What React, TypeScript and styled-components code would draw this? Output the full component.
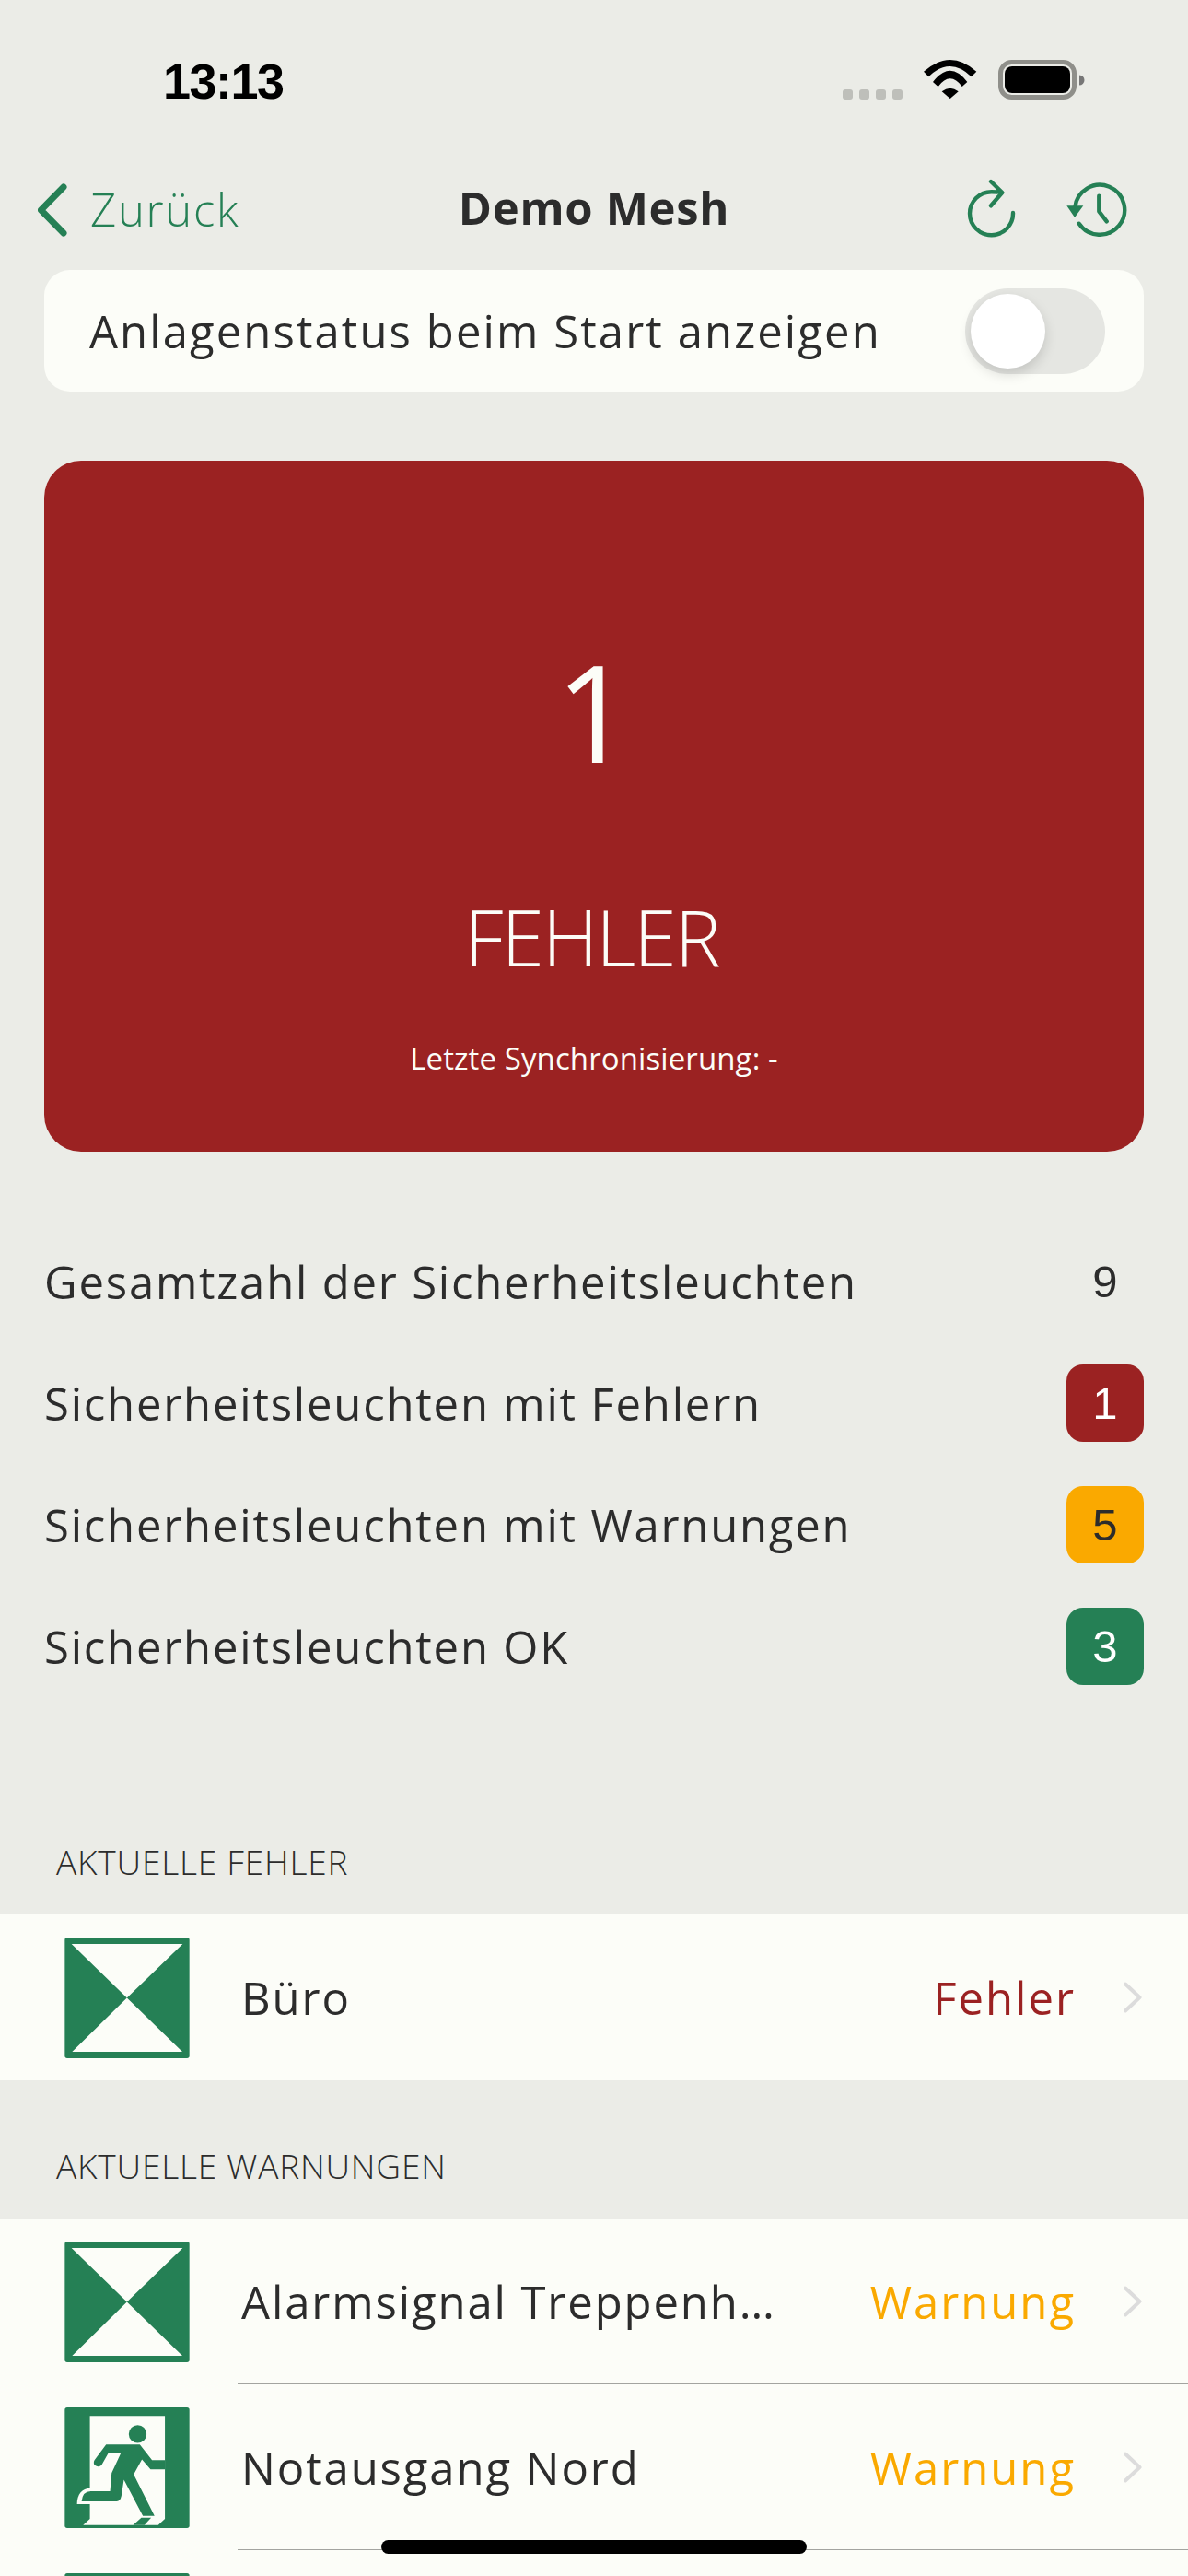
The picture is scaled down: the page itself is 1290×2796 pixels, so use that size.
import React from "react";
import styled, { createGlobalStyle } from "styled-components";

const GREEN = "#258055";
const RED = "#9b2222";
const ORANGE = "#faa900";
const INK = "#2c2c2c";
const TEXT_FONT = `"Open Sans", "Liberation Sans", sans-serif`;

type Tone = "error" | "warning" | "ok";

const toneColor = (tone: Tone) =>
  tone === "error" ? RED : tone === "warning" ? ORANGE : GREEN;

const stats: { label: string; value: number; tone?: Tone }[] = [
  { label: "Gesamtzahl der Sicherheitsleuchten", value: 9 },
  { label: "Sicherheitsleuchten mit Fehlern", value: 1, tone: "error" },
  { label: "Sicherheitsleuchten mit Warnungen", value: 5, tone: "warning" },
  { label: "Sicherheitsleuchten OK", value: 3, tone: "ok" },
];

const GlobalStyle = createGlobalStyle`
  html, body {
    margin: 0;
    padding: 0;
    background: #ebece7;
  }
`;

const App: React.FC = () => {
  return (
    <Page>
      <GlobalStyle />
      <StatusBar>
        <Clock>13:13</Clock>
        <StatusIcons>
          <SignalDots>
            <SignalDot />
            <SignalDot />
            <SignalDot />
            <SignalDot />
          </SignalDots>
          <svg width="58" height="43" viewBox="0 0 58 43">
            <path d="M0 12.7Q28.7-12.7 57.3 12.7L51.7 18.3Q28.7-4.3 5.3 18.3Z" />
            <path d="M10 24Q28.7-.6 47.3 24L41.7 29Q28.7 11.6 15.7 29Z" />
            <path d="M19.7 34.3Q28.7 27 37.7 34.3L28.7 42Z" />
          </svg>
          <svg width="94" height="43" viewBox="0 0 94 43">
            <rect x="2.5" y="2.5" width="80" height="38" rx="12" fill="none" stroke="#8f8f8a" strokeWidth="5" />
            <rect x="7" y="7" width="71" height="29" rx="8" fill="#000" />
            <path d="M88 16.500a5.500 5.500 0 0 1 0 11z" fill="#777" />
          </svg>
        </StatusIcons>
      </StatusBar>

      <NavBar>
        <BackLink>
          <svg width="32" height="58" viewBox="0 0 32 58">
            <path d="M28 4L3.500 29L28 54" fill="none" stroke={GREEN} strokeWidth="7" strokeLinecap="round" strokeLinejoin="round" />
          </svg>
          <BackLabel>Zurück</BackLabel>
        </BackLink>
        <NavTitle>Demo Mesh</NavTitle>
        <NavActions>
          <svg width="60" height="68" viewBox="0 0 60 68">
            <path
              d="M53 37A23.500 23.500 0 1 1 29.700 14.200L36 14.500M29 3l12.300 12L29 29.300"
              fill="none"
              stroke={GREEN}
              strokeWidth="4.400"
              strokeLinecap="round"
              strokeLinejoin="round"
            />
          </svg>
          <svg width="68" height="62" viewBox="0 0 68 62">
            <path
              d="M15.700 45.700A27 27 0 1 0 11.300 28M37.300 15.700V32.300L45.700 43.300"
              fill="none"
              stroke={GREEN}
              strokeWidth="4.400"
              strokeLinecap="round"
              strokeLinejoin="round"
            />
            <path d="M2.300 26.300H20.300L11 39Z" fill={GREEN} />
          </svg>
        </NavActions>
      </NavBar>

      <SettingCard>
        <SettingLabel>Anlagenstatus beim Start anzeigen</SettingLabel>
        <Toggle>
          <ToggleKnob />
        </Toggle>
      </SettingCard>

      <SummaryCard>
        <SummaryCount>1</SummaryCount>
        <SummaryState>FEHLER</SummaryState>
        <SummarySync>Letzte Synchronisierung: -</SummarySync>
      </SummaryCard>

      <StatList>
        {stats.map((stat) => (
          <StatRow key={stat.label}>
            <StatLabel>{stat.label}</StatLabel>
            <StatValue $tone={stat.tone}>{stat.value}</StatValue>
          </StatRow>
        ))}
      </StatList>

      <SectionHeader $height={249}>AKTUELLE FEHLER</SectionHeader>
      <DeviceList>
        <DeviceRow>
          <HourglassIcon />
          <DeviceBody>
            <DeviceName>Büro</DeviceName>
            <DeviceStatus $tone="error">Fehler</DeviceStatus>
            <Chevron />
          </DeviceBody>
        </DeviceRow>
      </DeviceList>

      <SectionHeader $height={150}>AKTUELLE WARNUNGEN</SectionHeader>
      <DeviceList>
        <DeviceRow>
          <HourglassIcon />
          <DeviceBody $divider>
            <DeviceName>Alarmsignal Treppenhaus</DeviceName>
            <DeviceStatus $tone="warning">Warnung</DeviceStatus>
            <Chevron />
          </DeviceBody>
        </DeviceRow>
        <DeviceRow>
          <ExitIcon />
          <DeviceBody $divider>
            <DeviceName>Notausgang Nord</DeviceName>
            <DeviceStatus $tone="warning">Warnung</DeviceStatus>
            <Chevron />
          </DeviceBody>
        </DeviceRow>
        <DeviceRow>
          <HourglassIcon />
          <DeviceBody />
        </DeviceRow>
      </DeviceList>

      <HomeIndicator />
    </Page>
  );
};

export default App;

const HourglassIcon: React.FC = () => (
  <DeviceIcon viewBox="0 0 407 394">
    <rect width="407" height="394" rx="8" fill={GREEN} />
    <path d="M22 21H385L203 197ZM24 373L203 197L384 373Z" fill="#fcfdf8" />
  </DeviceIcon>
);

const ExitIcon: React.FC = () => (
  <DeviceIcon viewBox="0 0 407 394">
    <rect width="407" height="394" rx="8" fill={GREEN} />
    <path d="M82 28H327V364L305 384H60L82 364Z" fill="#fcfdf8" />
    <path d="M223 384L250 360H282L260 384Z" fill={GREEN} />
    <circle cx="238" cy="87" r="29" fill={GREEN} />
    <path d="M40 316C40 285 55 264 85 264H100V316Z" fill="#fcfdf8" />
    <path
      d="M135 121H245L285 172H327V202H280L252 170L225 219L293 354H255L193 236L185 289Q181 307 170 307H55Q58 274 85 274H148L153 214L183 150H142L120 189Q110 198 98 189Q92 182 97 172Z"
      fill={GREEN}
    />
  </DeviceIcon>
);

const Chevron: React.FC = () => (
  <ChevronMark width="20" height="34" viewBox="0 0 20 34">
    <path d="M2 2.500L17.500 17L2 31.500" fill="none" stroke="#dcdcdc" strokeWidth="4" strokeLinecap="round" strokeLinejoin="round" />
  </ChevronMark>
);

const Page = styled.div`
  width: 1290px;
  height: 2796px;
  overflow: hidden;
  position: relative;
  background: #ebece7;
  color: ${INK};
  font-family: ${TEXT_FONT};
  font-weight: 400;
`;

const StatusBar = styled.div`
  height: 194px;
  box-sizing: border-box;
  padding: 65px 112px 0 177px;
  display: flex;
  justify-content: space-between;
  align-items: flex-start;
`;

const Clock = styled.div`
  font-family: "Liberation Sans", sans-serif;
  font-size: 54px;
  font-weight: 700;
  line-height: 46px;
  letter-spacing: -1.500px;
  color: #000;
`;

const StatusIcons = styled.div`
  display: flex;
  align-items: flex-end;
  gap: 23px;
`;

const SignalDots = styled.div`
  display: flex;
  gap: 7px;
`;

const SignalDot = styled.span`
  width: 11px;
  height: 11px;
  border-radius: 3px;
  background: #bebfba;
`;

const NavBar = styled.div`
  height: 68px;
  padding: 0 66px 0 41px;
  display: flex;
  align-items: center;
  justify-content: space-between;
  position: relative;
`;

const BackLink = styled.div`
  display: flex;
  align-items: center;
  gap: 25px;
  color: ${GREEN};
`;

const BackLabel = styled.span`
  font-size: 49px;
  font-weight: 300;
  line-height: 60px;
  margin-top: -2px;
  letter-spacing: 1.700px;
`;

const NavTitle = styled.div`
  position: absolute;
  left: 0;
  right: 0;
  top: -1px;
  text-align: center;
  font-size: 49px;
  line-height: 64px;
  font-weight: 700;
  letter-spacing: 0.700px;
  pointer-events: none;
`;

const NavActions = styled.div`
  display: flex;
  align-items: center;
  gap: 49px;
`;

const SettingCard = styled.div`
  margin: 31px 48px 0;
  height: 132px;
  box-sizing: border-box;
  padding: 0 42px 0 49px;
  background: #fcfdf8;
  border-radius: 28px;
  display: flex;
  align-items: center;
  justify-content: space-between;
`;

const SettingLabel = styled.div`
  font-size: 49px;
  letter-spacing: 2.100px;
  line-height: 60px;
`;

const Toggle = styled.div`
  width: 152px;
  height: 93px;
  box-sizing: border-box;
  padding: 6px;
  border-radius: 47px;
  background: #e5e6e2;
`;

const ToggleKnob = styled.div`
  width: 81px;
  height: 81px;
  border-radius: 50%;
  background: #fff;
  box-shadow: 0 6px 14px rgba(0, 0, 0, 0.15);
`;

const SummaryCard = styled.div`
  margin: 75px 48px 0;
  height: 750px;
  background: ${RED};
  border-radius: 40px;
  color: #fcfdf8;
  display: flex;
  flex-direction: column;
  align-items: center;
`;

const SummaryCount = styled.div`
  margin-top: 212px;
  height: 120px;
  font-size: 146px;
  line-height: 120px;
`;

const SummaryState = styled.div`
  margin: 140px 5px 0 0;
  height: 90px;
  font-size: 84px;
  font-weight: 300;
  letter-spacing: -2px;
  line-height: 90px;
`;

const SummarySync = styled.div`
  margin-top: 65px;
  font-size: 33px;
  letter-spacing: 0.100px;
  line-height: 44px;
`;

const StatList = styled.div`
  margin: 99px 48px 0;
  display: flex;
  flex-direction: column;
  gap: 48px;
`;

const StatRow = styled.div`
  height: 84px;
  display: flex;
  align-items: center;
  justify-content: space-between;
`;

const StatLabel = styled.div`
  font-size: 49px;
  letter-spacing: 1.800px;
`;

const StatValue = styled.div<{ $tone?: Tone }>`
  width: 84px;
  height: 84px;
  border-radius: 18px;
  display: flex;
  align-items: center;
  justify-content: center;
  font-family: "Liberation Sans", sans-serif;
  font-size: 49px;
  background: ${(props) => (props.$tone ? toneColor(props.$tone) : "transparent")};
  color: ${(props) =>
    props.$tone === "error" || props.$tone === "ok" ? "#fff" : INK};
`;

const SectionHeader = styled.div<{ $height: number }>`
  height: ${(props) => props.$height}px;
  box-sizing: border-box;
  padding: 0 0 32px 61px;
  display: flex;
  align-items: flex-end;
  font-size: 37px;
  font-weight: 300;
  letter-spacing: 0.800px;
`;

const DeviceList = styled.div`
  background: #fcfdf8;
`;

const DeviceRow = styled.div`
  height: 180px;
  box-sizing: border-box;
  padding-left: 70px;
  display: flex;
  align-items: center;
  gap: 52px;
`;

const DeviceIcon = styled.svg`
  width: 136px;
  height: 131px;
  flex-shrink: 0;
`;

const DeviceBody = styled.div<{ $divider?: boolean }>`
  flex: 1;
  min-width: 0;
  height: 100%;
  box-sizing: border-box;
  padding: 0 50px 0 4px;
  display: flex;
  align-items: center;
  border-bottom: ${(props) => (props.$divider ? "1.500px solid #a3a4a0" : "none")};
`;

const DeviceName = styled.div`
  flex: 1;
  min-width: 0;
  margin-right: 88px;
  font-size: 49px;
  letter-spacing: 1.900px;
  white-space: nowrap;
  overflow: hidden;
  text-overflow: ellipsis;
`;

const DeviceStatus = styled.div<{ $tone: Tone }>`
  font-size: 49px;
  letter-spacing: 2px;
  color: ${(props) => toneColor(props.$tone)};
  white-space: nowrap;
`;

const ChevronMark = styled.svg`
  margin-left: 52px;
  flex-shrink: 0;
`;

const HomeIndicator = styled.div`
  position: absolute;
  left: 414px;
  top: 2757px;
  width: 462px;
  height: 15px;
  border-radius: 8px;
  background: #000;
`;
